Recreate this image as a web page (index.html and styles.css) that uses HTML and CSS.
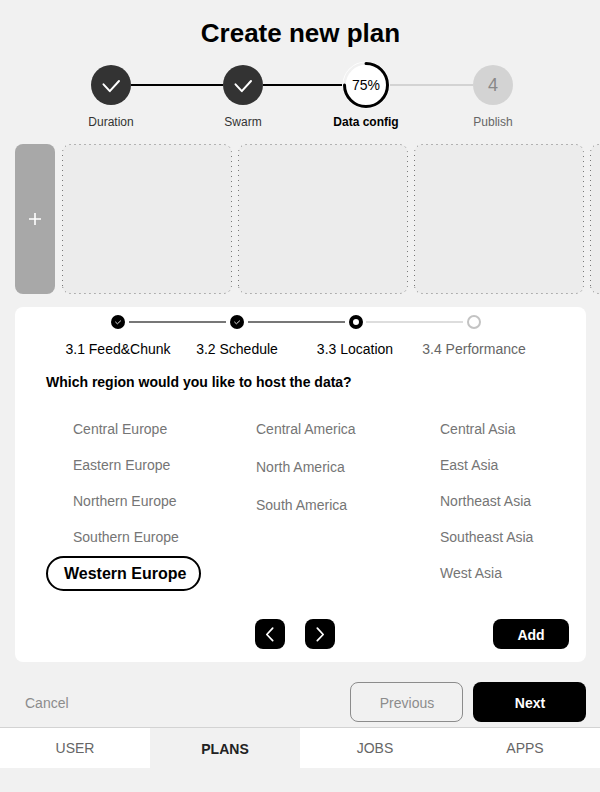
FILE: index.html
```html
<!DOCTYPE html>
<html lang="en">
<head>
<meta charset="utf-8">
<title>Create new plan</title>
<link rel="stylesheet" href="styles.css">
</head>
<body>
<svg class="defs" width="0" height="0" aria-hidden="true">
  <symbol id="slot" viewBox="0 0 170 150">
    <path d="M.5 142V8.500a8 8 0 0 1 8-8h153a8 8 0 0 1 8 8v133a8 8 0 0 1-8 8H8.500a8 8 0 0 1-8-8" fill="#ececec" stroke="#777" stroke-dasharray="1 4"/>
  </symbol>
  <symbol id="tick" viewBox="0 0 40 40">
    <path d="M12.500 19.300 18.800 26.200 28 16" fill="none" stroke="#fff" stroke-width="2" stroke-linecap="round" stroke-linejoin="round"/>
  </symbol>
  <symbol id="dot-tick" viewBox="0 0 14 14">
    <circle cx="7" cy="7" r="7"/>
    <path d="M4.300 6.800 6.400 8.800 9.900 5.600" fill="none" stroke="#ddd" stroke-width="1"/>
  </symbol>
</svg>

<h1 class="title">Create new plan</h1>

<ol class="steps">
  <li class="step"><span class="mark done"><svg width="40" height="40"><use href="#tick"/></svg></span><span class="label">Duration</span></li>
  <li class="step"><span class="mark done"><svg width="40" height="40"><use href="#tick"/></svg></span><span class="label">Swarm</span></li>
  <li class="step current">
    <span class="mark progress">
      <svg class="ring" width="48" height="48" viewBox="0 0 48 48">
        <circle cx="24" cy="24" r="23.500" fill="#fff"/>
        <circle cx="24" cy="24" r="21.500" fill="none" stroke="#f1f1f1" stroke-width="2.500"/>
        <path d="M24 2.500A21.500 21.500 0 1 1 2.500 24" fill="none" stroke="#000" stroke-width="3" stroke-linecap="round"/>
      </svg>
      <span class="percent">75%</span>
    </span>
    <span class="label">Data config</span>
  </li>
  <li class="step pending"><span class="mark"><b>4</b></span><span class="label">Publish</span></li>
</ol>

<section class="slots">
  <button class="add-slot" aria-label="Add slot"><svg width="12" height="12" viewBox="0 0 12 12"><path d="M6 0v12M0 6h12" stroke="#fff" stroke-width="1.600"/></svg></button>
  <svg class="slot"><use href="#slot"/></svg>
  <svg class="slot"><use href="#slot"/></svg>
  <svg class="slot"><use href="#slot"/></svg>
  <svg class="slot"><use href="#slot"/></svg>
</section>

<main class="panel">
  <ol class="substeps">
    <li class="substep"><svg class="dot"><use href="#dot-tick"/></svg><span>3.1 Feed&amp;Chunk</span></li>
    <li class="substep"><svg class="dot"><use href="#dot-tick"/></svg><span>3.2 Schedule</span></li>
    <li class="substep active"><i class="dot ring-dot"></i><span>3.3 Location</span></li>
    <li class="substep upcoming"><i class="dot ring-dot"></i><span>3.4 Performance</span></li>
  </ol>
  <h2 class="question">Which region would you like to host the data?</h2>
  <div class="regions">
    <ul class="region-list">
      <li>Central Europe</li>
      <li>Eastern Europe</li>
      <li>Northern Europe</li>
      <li>Southern Europe</li>
      <li class="selected">Western Europe</li>
    </ul>
    <ul class="region-list airy">
      <li>Central America</li>
      <li>North America</li>
      <li>South America</li>
    </ul>
    <ul class="region-list">
      <li>Central Asia</li>
      <li>East Asia</li>
      <li>Northeast Asia</li>
      <li>Southeast Asia</li>
      <li>West Asia</li>
    </ul>
  </div>
  <div class="panel-actions">
    <button class="arrow" aria-label="Back"><svg width="30" height="30"><path d="M17.700 9.200 11.800 15.500 17.700 21.700"/></svg></button>
    <button class="arrow" aria-label="Forward"><svg width="30" height="30"><path d="M12.300 9.200 18.200 15.500 12.300 21.700"/></svg></button>
    <button class="add">Add</button>
  </div>
</main>

<footer class="actions">
  <button class="cancel">Cancel</button>
  <button class="previous">Previous</button>
  <button class="next">Next</button>
</footer>

<nav class="tabs">
  <a>USER</a>
  <a class="selected-tab">PLANS</a>
  <a>JOBS</a>
  <a>APPS</a>
</nav>
</body>
</html>
```
FILE: styles.css
```css
* { box-sizing: border-box; }

body {
  margin: 0;
  width: 600px;
  height: 792px;
  overflow: hidden;
  background: #f1f1f1;
  font: 14px/16px "Liberation Sans", Arial, sans-serif;
  color: #000;
}

ol, ul { margin: 0; padding: 0; list-style: none; }
button { margin: 0; padding: 0; border: 0; font: inherit; }
svg { display: block; }
.defs { position: absolute; }

.title {
  margin: 0;
  padding: 18px 0 0 1px;
  font-size: 26px;
  line-height: 30px;
  text-align: center;
}

.steps {
  display: grid;
  grid-template-columns: 132px 132px 114px 140px;
  margin: 13px 0 0 45px;
}
.step { display: flex; flex-direction: column; align-items: center; }
.mark {
  display: flex;
  align-items: center;
  justify-content: center;
  width: 100%;
  height: 48px;
  font-size: 18px;
}
.mark::before, .mark::after { content: ""; flex: 1; height: 2px; background: #000; }
.step:first-child .mark::before { background: none; }
.done svg { border-radius: 50%; background: #333; }
.progress { position: relative; }
.progress::after { background: #d3d3d3; }
.percent { position: absolute; font-size: 14px; }
.label { margin-top: 6px; font-size: 12px; line-height: 14px; color: #333; }
.current .label { font-weight: bold; color: #000; }
.pending .mark::before { background: #d3d3d3; }
.pending .mark::after { background: none; }
.pending b {
  width: 40px;
  height: 40px;
  border-radius: 50%;
  background: #d3d3d3;
  color: #888;
  font-weight: normal;
  line-height: 40px;
  text-align: center;
}
.pending .label { color: #666; }

.slots { display: flex; gap: 6px; overflow: hidden; margin: 15px 0 0 15px; }
.add-slot {
  display: flex;
  flex: none;
  align-items: center;
  justify-content: center;
  width: 40px;
  height: 150px;
  margin-right: 1px;
  border-radius: 8px;
  background: #a8a8a8;
}
.slot { flex: none; width: 170px; height: 150px; }

.panel {
  width: 571px;
  height: 355px;
  margin: 13px 0 0 15px;
  padding-top: 8px;
  border-radius: 8px;
  background: #fff;
}
.substeps { display: grid; grid-template-columns: 119px 119px 119px 117px; margin-left: 43.500px; }
.substep { display: grid; grid-template-columns: 1fr 14px 1fr; column-gap: 4px; align-items: center; }
.substep::before, .substep::after { content: ""; grid-row: 1; height: 2px; background: #777; }
.substep::before { grid-column: 1; margin-left: -1px; }
.substep::after { grid-column: 3; }
.substep:first-child::before, .substep:last-child::after { background: none; }
.dot { grid-column: 2; grid-row: 1; width: 14px; height: 14px; }
.substep span { grid-column: 1 / -1; margin-top: 12px; text-align: center; white-space: nowrap; }
.ring-dot { border: 4px solid #000; border-radius: 50%; }
.active::after, .upcoming::before { background: #ddd; }
.active::after { margin-left: -1px; }
.active span { margin-left: -2px; }
.upcoming .ring-dot { border: 2px solid #c3c3c3; }
.upcoming span { color: #666; }

.question { margin: 17px 0 0 31px; font-size: 14px; line-height: 16px; }

.regions { display: grid; grid-template-columns: 183px 184px 1fr; height: 182px; margin: 21px 0 0 31px; color: #757575; }
.region-list { padding-left: 27px; line-height: 36px; }
.airy { line-height: 38px; margin-top: -1px; }
.selected {
  width: 155px;
  height: 35px;
  margin: 1px 0 0 -27px;
  border: 2px solid #000;
  border-radius: 18px;
  font-size: 16px;
  font-weight: bold;
  line-height: 32px;
  padding-left: 16px;
  color: #000;
}

.panel-actions { display: flex; gap: 20px; margin: 26px 17px 0 240px; }
.arrow { width: 30px; height: 30px; border-radius: 8px; background: #000; }
.arrow path { fill: none; stroke: #fff; stroke-width: 1.700; stroke-linecap: round; stroke-linejoin: round; }
.add { width: 76px; height: 30px; margin-left: auto; padding-top: 1px; border-radius: 8px; background: #000; color: #fff; font-weight: bold; }

.actions { display: flex; gap: 10px; margin: 20px 14px 0 25px; }
.cancel { margin-right: auto; padding-top: 2px; background: none; color: #8c8c8c; }
.previous, .next { width: 113px; height: 40px; padding: 2px 0 0 1px; border-radius: 8px; }
.previous { border: 1px solid #8c8c8c; background: none; color: #8c8c8c; }
.next { background: #000; color: #fff; font-weight: bold; }

.tabs { display: grid; grid-template-columns: repeat(4, 1fr); grid-template-rows: 40px; margin-top: 5px; border-top: 1px solid #d3d3d3; }
.tabs a { background: #fff; color: #666; line-height: 40px; text-align: center; }
.tabs .selected-tab { background: none; color: #222; font-weight: bold; line-height: 42px; }
```
